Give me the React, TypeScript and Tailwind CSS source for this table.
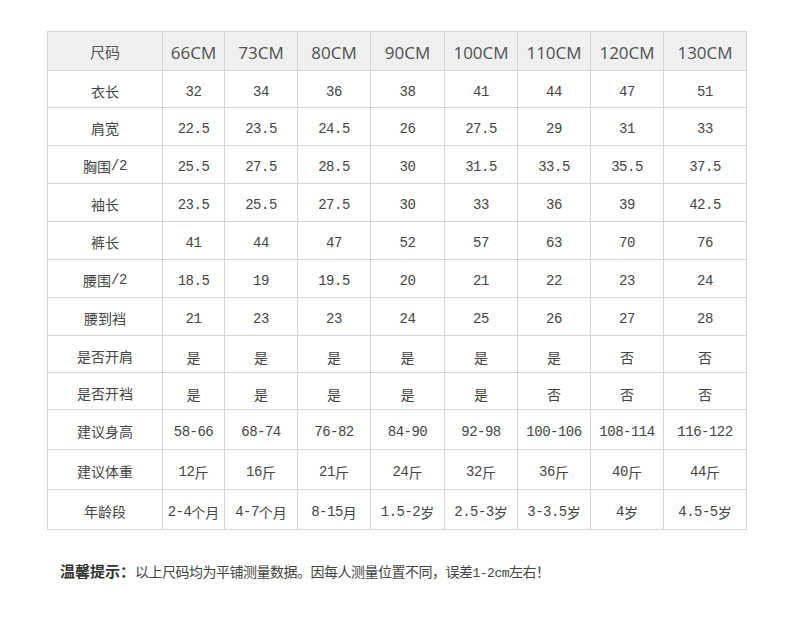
import React from 'react';

const sizes = ['66CM', '73CM', '80CM', '90CM', '100CM', '110CM', '120CM', '130CM'];

const rows: { label: string; values: string[]; h: string }[] = [
  { label: '衣长', values: ['32', '34', '36', '38', '41', '44', '47', '51'], h: 'h-[37px]' },
  { label: '肩宽', values: ['22.5', '23.5', '24.5', '26', '27.5', '29', '31', '33'], h: 'h-[38px]' },
  { label: '胸围/2', values: ['25.5', '27.5', '28.5', '30', '31.5', '33.5', '35.5', '37.5'], h: 'h-[38px]' },
  { label: '袖长', values: ['23.5', '25.5', '27.5', '30', '33', '36', '39', '42.5'], h: 'h-[38px]' },
  { label: '裤长', values: ['41', '44', '47', '52', '57', '63', '70', '76'], h: 'h-[38px]' },
  { label: '腰围/2', values: ['18.5', '19', '19.5', '20', '21', '22', '23', '24'], h: 'h-[38px]' },
  { label: '腰到裆', values: ['21', '23', '23', '24', '25', '26', '27', '28'], h: 'h-[38px]' },
  { label: '是否开肩', values: ['是', '是', '是', '是', '是', '是', '否', '否'], h: 'h-[37px]' },
  { label: '是否开裆', values: ['是', '是', '是', '是', '是', '否', '否', '否'], h: 'h-[37px]' },
  { label: '建议身高', values: ['58-66', '68-74', '76-82', '84-90', '92-98', '100-106', '108-114', '116-122'], h: 'h-[40px]' },
  { label: '建议体重', values: ['12斤', '16斤', '21斤', '24斤', '32斤', '36斤', '40斤', '44斤'], h: 'h-[40px]' },
  { label: '年龄段', values: ['2-4个月', '4-7个月', '8-15月', '1.5-2岁', '2.5-3岁', '3-3.5岁', '4岁', '4.5-5岁'], h: 'h-[40px]' },
];

// split into CJK runs and latin runs so digits get the mono face
const Mixed: React.FC<{ text: string }> = ({ text }) => {
  const parts = text.match(/[\u3000-\u9fff\uff00-\uffef]+|[^\u3000-\u9fff\uff00-\uffef]+/g) || [];
  return (
    <>
      {parts.map((p, i) =>
        /[\u3000-\u9fff\uff00-\uffef]/.test(p) ? (
          <span key={i} className="text-[14px] font-['Noto_Sans_CJK_SC',sans-serif]">{p}</span>
        ) : (
          <span key={i} className="text-[14px] tracking-[-0.5px] font-['Liberation_Mono',monospace]">{p}</span>
        )
      )}
    </>
  );
};

export default function App() {
  return (
    <div className="w-[790px] h-[643px] bg-white overflow-hidden">
      <div className="ml-[47px] mt-[31px] w-[700px] border-l border-t border-[#d3d3d3] grid grid-cols-[115px_62px_73px_73px_74px_73px_73px_73px_83px]">
        <div className="h-[39px] bg-[#efefef] border-r border-b border-[#d3d3d3] flex items-center justify-center pt-[2px] text-[15px] text-[#555] font-['Noto_Sans_CJK_SC',sans-serif]">
          尺码
        </div>
        {sizes.map((s) => (
          <div
            key={s}
            className="h-[39px] bg-[#efefef] border-r border-b border-[#d3d3d3] flex items-center justify-center pt-[4px] text-[17px] text-[#505050] font-['Open_Sans',sans-serif]"
          >
            {s}
          </div>
        ))}
        {rows.map((r) => (
          <React.Fragment key={r.label}>
            <div className={`${r.h} border-r border-b border-[#d3d3d3] flex items-center justify-center pt-[3px] text-[#444] leading-none`}>
              <Mixed text={r.label} />
            </div>
            {r.values.map((v, i) => (
              <div
                key={i}
                className={`${r.h} border-r border-b border-[#d3d3d3] flex items-center justify-center pt-[5px] text-[#444] leading-none`}
              >
                <Mixed text={v} />
              </div>
            ))}
          </React.Fragment>
        ))}
      </div>
      <div className="ml-[60px] mt-[31px] text-[14px] leading-[20px] text-[#444] font-['Noto_Sans_CJK_SC',sans-serif]">
        <span className="text-[15px] font-bold text-[#333]">温馨提示：</span>
        <span className="tracking-[-0.5px]">以上尺码均为平铺测量数据。因每人测量位置不同，误差</span>
        <span className="text-[13px] tracking-[-0.5px] font-['Liberation_Mono',monospace]">1-2cm</span>
        <span className="tracking-[-0.5px]">左右！</span>
      </div>
    </div>
  );
}
